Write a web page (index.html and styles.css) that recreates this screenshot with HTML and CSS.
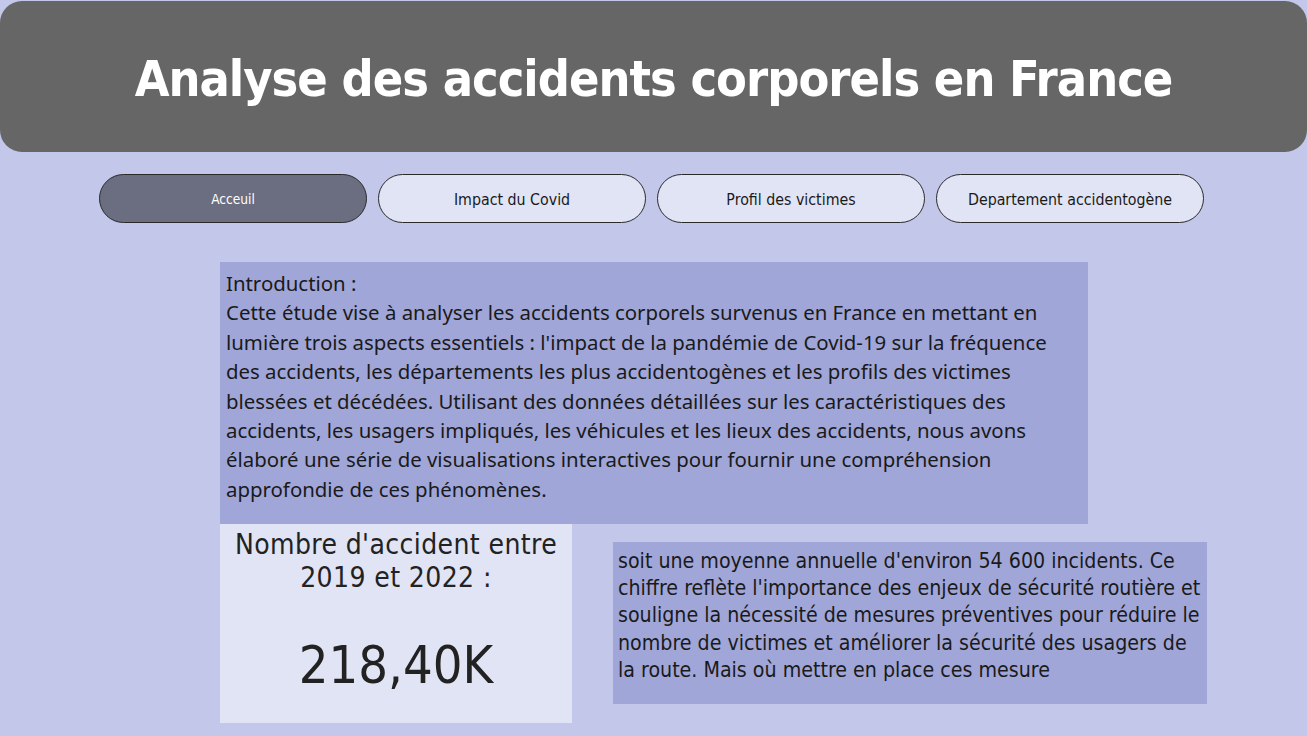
FILE: index.html
```html
<!DOCTYPE html>
<html lang="fr">
<head>
<meta charset="utf-8">
<title>Analyse des accidents corporels en France</title>
<link rel="stylesheet" href="styles.css">
</head>
<body>
<header class="banner">
  <h1 class="title">Analyse des accidents corporels en France</h1>
</header>
<nav class="tabs">
  <div class="tab tab-active">Acceuil</div>
  <div class="tab">Impact du Covid</div>
  <div class="tab">Profil des victimes</div>
  <div class="tab">Departement accidentogène</div>
</nav>
<main class="content">
  <section class="intro">
    <p>Introduction :<br>Cette étude vise à analyser les accidents corporels survenus en France en mettant en lumière trois aspects essentiels : l'impact de la pandémie de Covid-19 sur la fréquence des accidents, les départements les plus accidentogènes et les profils des victimes blessées et décédées. Utilisant des données détaillées sur les caractéristiques des accidents, les usagers impliqués, les véhicules et les lieux des accidents, nous avons élaboré une série de visualisations interactives pour fournir une compréhension approfondie de ces phénomènes.</p>
  </section>
  <div class="row">
    <section class="kpi">
      <div class="kpi-label">Nombre d'accident entre<br>2019 et 2022 :</div>
      <div class="kpi-value">218,40K</div>
    </section>
    <section class="note">
      <p>soit une moyenne annuelle d'environ 54 600 incidents. Ce chiffre reflète l'importance des enjeux de sécurité routière et souligne la nécessité de mesures préventives pour réduire le nombre de victimes et améliorer la sécurité des usagers de la route. Mais où mettre en place ces mesure</p>
    </section>
  </div>
</main>
</body>
</html>
```

FILE: styles.css
```css
* { box-sizing: border-box; }
html, body { margin: 0; padding: 0; }
body {
  width: 1307px;
  height: 736px;
  overflow: hidden;
  background: #c3c8ea;
  font-family: "Noto Sans", "DejaVu Sans", sans-serif;
  color: #1e1e1e;
}
.banner {
  margin-top: 1px;
  height: 151px;
  background: #666666;
  border-radius: 22px;
  display: flex;
  align-items: center;
  justify-content: center;
}
.title {
  margin: 0;
  padding-top: 4px;
  color: #ffffff;
  font-family: "DejaVu Sans Condensed", "DejaVu Sans", sans-serif;
  font-weight: bold;
  font-size: 50px;
  letter-spacing: -1px;
}
.tabs {
  display: flex;
  gap: 11px;
  padding-left: 99px;
  margin-top: 22px;
}
.tab {
  width: 268px;
  height: 49px;
  padding-top: 1px;
  border: 1px solid #2a2a2a;
  border-radius: 25px;
  background: #e1e4f5;
  display: flex;
  align-items: center;
  justify-content: center;
  font-family: "DejaVu Sans Condensed", "DejaVu Sans", sans-serif;
  font-size: 15.8px;
  color: #1a1a1a;
}
.tab-active {
  background: #6b6e80;
  color: #ffffff;
  font-size: 13.6px;
}
.content {
  padding-left: 220px;
  margin-top: 39px;
}
.intro {
  width: 868px;
  height: 262px;
  background: #a0a6d8;
  padding: 7px 30px 0 6px;
}
.intro p {
  margin: 0;
  font-size: 20.4px;
  line-height: 29.4px;
  color: #1a1a1a;
}
.row {
  display: flex;
  align-items: flex-start;
}
.kpi {
  width: 352px;
  height: 199px;
  background: #e1e4f5;
  text-align: center;
  padding-top: 4px;
}
.kpi-label {
  font-family: "DejaVu Sans Condensed", "DejaVu Sans", sans-serif;
  font-size: 28px;
  line-height: 33px;
  letter-spacing: 0.4px;
  color: #222;
}
.kpi-value {
  margin-top: 41px;
  font-family: "DejaVu Sans Condensed", "DejaVu Sans", sans-serif;
  font-size: 52px;
  line-height: 60px;
  color: #222;
}
.note {
  margin-left: 41px;
  margin-top: 18px;
  width: 594px;
  height: 162px;
  background: #a0a6d8;
  padding: 5px 4px 0 5px;
}
.note p {
  margin: 0;
  font-family: "DejaVu Sans Condensed", sans-serif;
  font-size: 21.2px;
  line-height: 27.2px;
  color: #1a1a1a;
}
```
